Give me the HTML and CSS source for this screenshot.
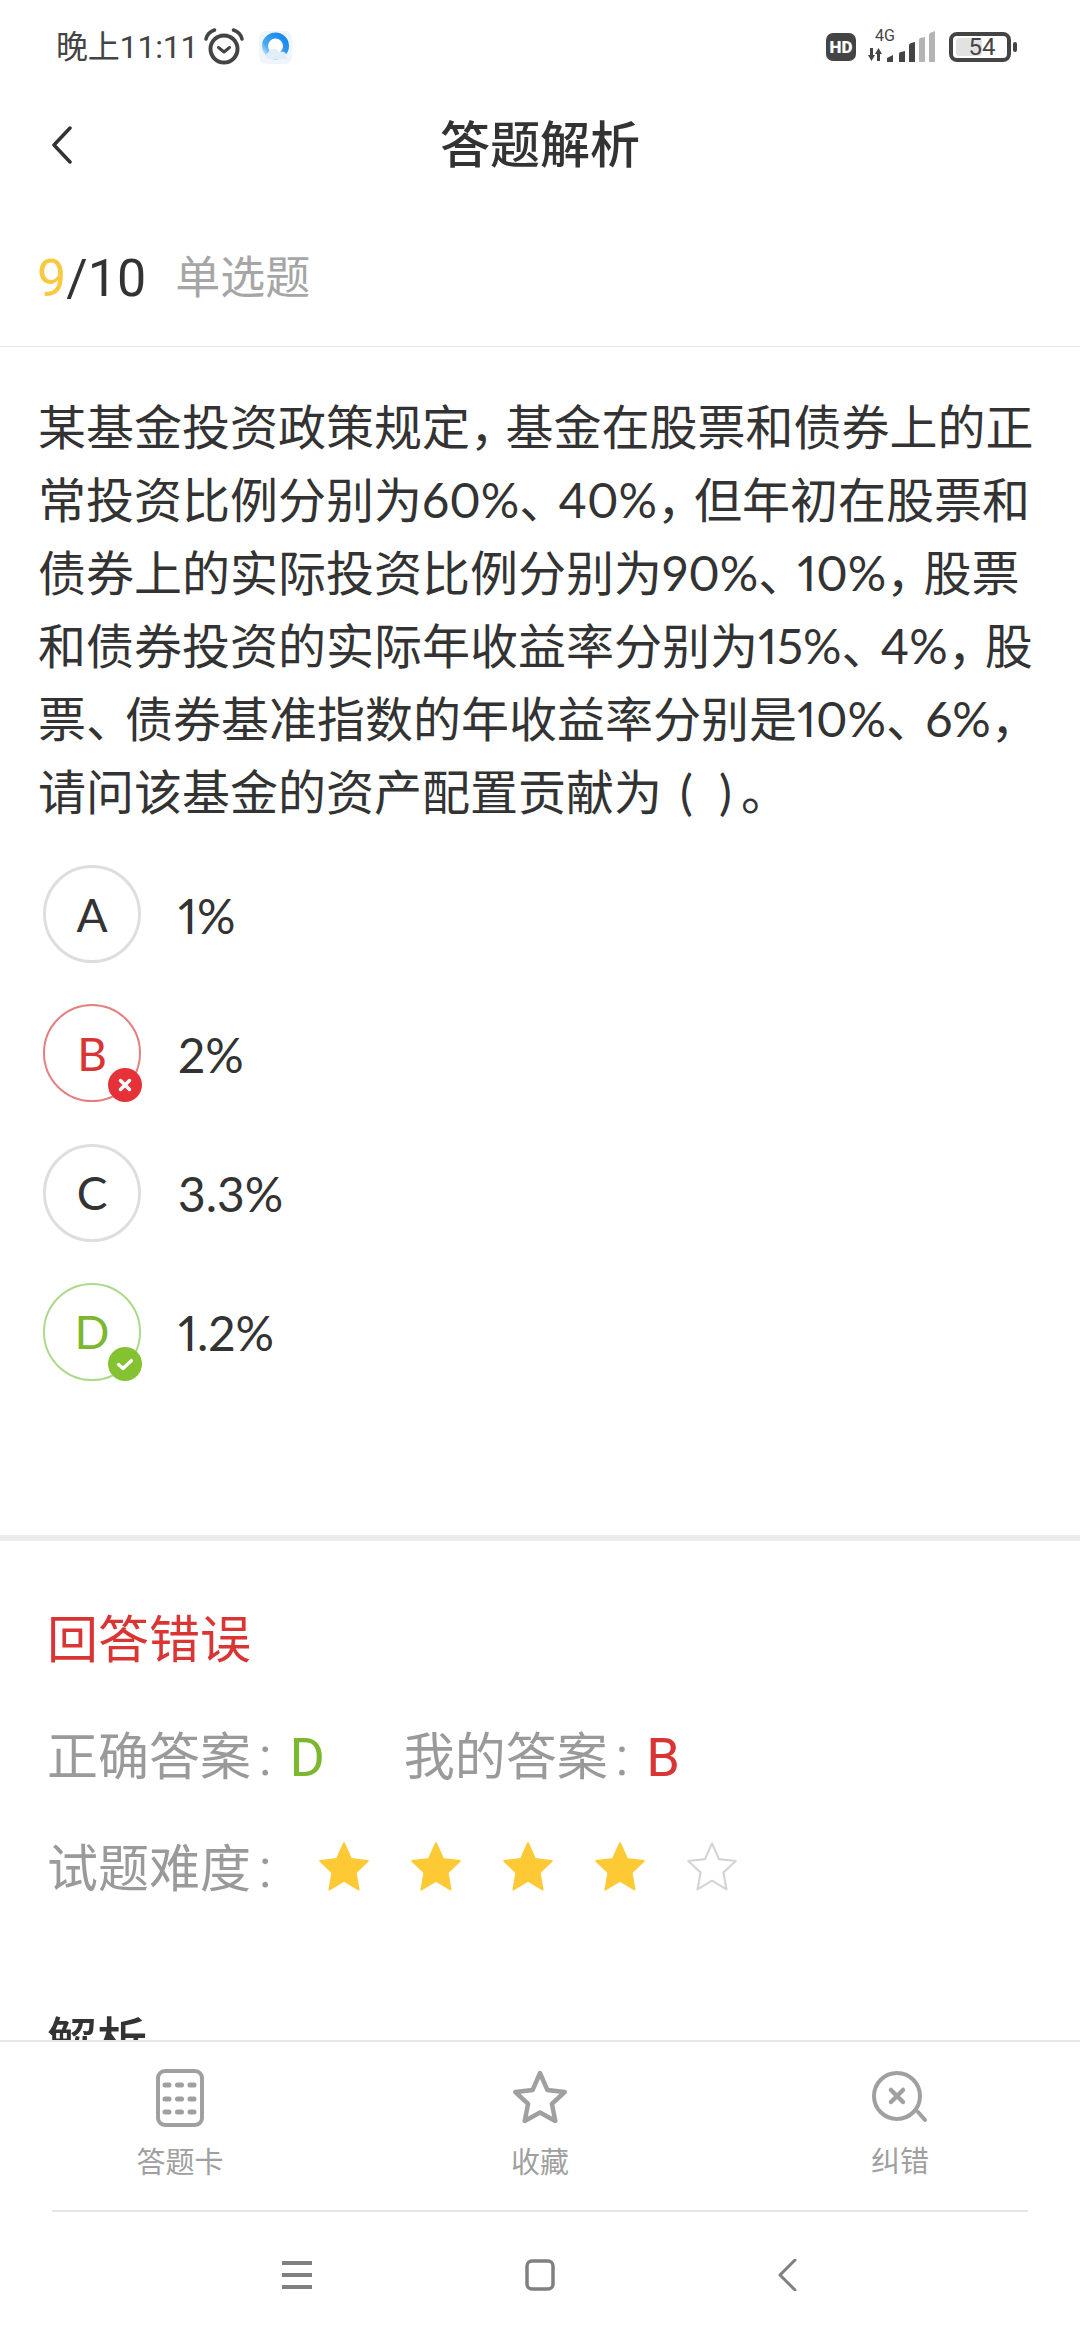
FILE: index.html
```html
<!DOCTYPE html>
<html lang="zh-CN">
<head>
<meta charset="utf-8">
<title>答题解析</title>
<link rel="stylesheet" href="styles.css">
</head>
<body>
<svg class="defs" width="0" height="0" aria-hidden="true">
  <defs>
    <polygon id="star-shape" points="25,3 31.5,17.6 46.9,19.4 35.6,30 38.4,45.6 25,37.6 11.6,45.6 14.4,30 3.1,19.4 18.5,17.6"/>
    <linearGradient id="app-ring" x1="1" y1="0" x2="0" y2="1">
      <stop offset="0" stop-color="#0f84ec"/>
      <stop offset="0.7" stop-color="#4aa8f0"/>
      <stop offset="1" stop-color="#cfe6fa"/>
    </linearGradient>
  </defs>
</svg>
<div class="page">
  <div class="scroll">
    <div class="status">
      <div class="status-left">
        <span class="clock">晚上11:11</span>
        <svg class="alarm" width="40" height="38" viewBox="0 0 40 38" fill="none" stroke="#444">
          <circle cx="20" cy="21" r="13.5" stroke-width="4"/>
          <path d="M14.5 19.5l5.5 4.5 5.5-4.5" stroke-width="3" stroke-linecap="round" stroke-linejoin="round"/>
          <path d="M2 11C3 6.500 6 3.500 10.500 2M38 11C37 6.500 34 3.500 29.500 2" stroke-width="3.500" stroke-linecap="round"/>
        </svg>
        <svg class="app" width="33" height="33" viewBox="0 0 33 33">
          <rect width="33" height="33" rx="7" fill="#f0f5fb"/>
          <circle cx="16.500" cy="15" r="10.500" fill="#fff" stroke="url(#app-ring)" stroke-width="6"/>
          <path d="M9 28c-3-1-3-5 0-6 1-5 9-6 11-1 5-2 9 2 8 7z" fill="#e1eefa"/>
        </svg>
      </div>
      <div class="status-right">
        <svg class="hd" width="30" height="28" viewBox="0 0 30 28">
          <rect width="30" height="28" rx="7" fill="#444"/>
          <text class="hd-text" x="15" y="20" text-anchor="middle">HD</text>
        </svg>
        <svg class="signal" width="68" height="36" viewBox="0 -4 68 36">
          <text class="net-text" x="7" y="11">4G</text>
          <path d="M2 18h3v7h2l-3.500 6L0 25h2zM10.500 18l3.500 6h-2v7H9v-7H7z" fill="#444"/>
          <path d="M19 32v-4l6-3v7zM31 32V24q0-2 2-2l4-1v11zM41 32V15q0-1 2-2l4-1v20z" fill="#444"/>
          <path d="M51 32V10q0-1 1-2l5-1v25zM61 32V5q0-1 1-2l5-2v31z" fill="#b4b4b4"/>
        </svg>
        <div class="battery">
          <div class="battery-body">
            <span class="battery-fill"></span>
            <span class="battery-num">54</span>
          </div>
          <span class="battery-tip"></span>
        </div>
      </div>
    </div>

    <header class="topbar">
      <svg class="topbar-back" width="22" height="38" viewBox="0 0 22 38" fill="none">
        <path d="M19 2L3 19l16 17" stroke="#333" stroke-width="3.500" stroke-linecap="round" stroke-linejoin="round"/>
      </svg>
      <h1 class="topbar-title">答题解析</h1>
    </header>

    <div class="meta">
      <span class="meta-count"><span class="meta-now">9</span>/10</span>
      <span class="meta-type">单选题</span>
    </div>

    <section class="quiz">
      <p class="stem">某基金投资政策规定<span class="cm">，</span>基金在股票和债券上的正<br>常投资比例分别为60%<span class="dn">、</span>40%<span class="cm cm-num">，</span>但年初在股票和<br>债券上的实际投资比例分别为90%<span class="dn">、</span>10%<span class="cm cm-num">，</span>股票<br>和债券投资的实际年收益率分别为15%<span class="dn">、</span>4%<span class="cm cm-num">，</span>股<br>票<span class="dn">、</span>债券基准指数的年收益率分别是10%<span class="dn">、</span>6%<span class="cm cm-num">，</span><br>请问该基金的资产配置贡献为<span class="paren">( )</span>。</p>
      <ul class="options">
        <li class="option">
          <span class="bubble">A</span>
          <span class="option-text">1%</span>
        </li>
        <li class="option">
          <span class="bubble bubble-wrong">B
            <svg class="mark" width="34" height="34" viewBox="0 0 34 34">
              <circle cx="17" cy="17" r="17" fill="#e53238"/>
              <path d="M12.500 12.500l9 9m0-9l-9 9" stroke="#fff" stroke-width="3.500" stroke-linecap="round" fill="none"/>
            </svg>
          </span>
          <span class="option-text">2%</span>
        </li>
        <li class="option">
          <span class="bubble">C</span>
          <span class="option-text">3.3%</span>
        </li>
        <li class="option">
          <span class="bubble bubble-right">D
            <svg class="mark" width="34" height="34" viewBox="0 0 34 34">
              <circle cx="17" cy="17" r="17" fill="#85c232"/>
              <path d="M10.500 17.500l4.500 4 8.500-8" stroke="#fff" stroke-width="3.200" stroke-linecap="round" stroke-linejoin="round" fill="none"/>
            </svg>
          </span>
          <span class="option-text">1.2%</span>
        </li>
      </ul>
    </section>

    <section class="result">
      <h2 class="verdict">回答错误</h2>
      <div class="answers">
        <span class="answer"><span class="label">正确答案</span><span class="colon">:</span><span class="value value-right">D</span></span>
        <span class="answer"><span class="label">我的答案</span><span class="colon">:</span><span class="value value-wrong">B</span></span>
      </div>
      <div class="difficulty">
        <span class="label">试题难度</span><span class="colon">:</span>
        <div class="stars">
          <svg class="star" viewBox="0 0 50 48"><use href="#star-shape"/></svg>
          <svg class="star" viewBox="0 0 50 48"><use href="#star-shape"/></svg>
          <svg class="star" viewBox="0 0 50 48"><use href="#star-shape"/></svg>
          <svg class="star" viewBox="0 0 50 48"><use href="#star-shape"/></svg>
          <svg class="star star-empty" viewBox="0 0 50 48"><use href="#star-shape"/></svg>
        </div>
      </div>
      <h2 class="analysis">解析</h2>
    </section>
  </div>

  <footer class="tools">
    <div class="tool-row">
      <div class="tool">
        <svg class="tool-icon" width="60" height="60" viewBox="0 0 60 60" fill="none" stroke="#a0a0a0">
          <rect x="8" y="2" width="44" height="54" rx="7" stroke-width="4"/>
          <path d="M15 16h4M27.500 16h4M40 16h4M15 30h4M27.500 30h4M40 30h4M15 43h4M27.500 43h4M40 43h4" stroke-width="5" stroke-linecap="round"/>
        </svg>
        <span class="tool-label">答题卡</span>
      </div>
      <div class="tool">
        <svg class="tool-icon" width="60" height="60" viewBox="0 0 60 60" fill="none">
          <polygon points="30,4 37.300,20.900 54.700,23 41.900,34.900 45.300,52 30,43.500 14.700,52 18.100,34.900 5.300,23 22.700,20.900" stroke="#a0a0a0" stroke-width="4.500" stroke-linejoin="round"/>
        </svg>
        <span class="tool-label">收藏</span>
      </div>
      <div class="tool tool-raised">
        <svg class="tool-icon" width="60" height="60" viewBox="0 0 60 60" fill="none" stroke="#a0a0a0" stroke-linecap="round">
          <circle cx="27" cy="28" r="23" stroke-width="4"/>
          <path d="M21 22l12 12m0-12L21 34" stroke-width="4.500"/>
          <path d="M48 44l7 8" stroke-width="4"/>
        </svg>
        <span class="tool-label">纠错</span>
      </div>
    </div>
    <div class="tool-rule"></div>
    <nav class="sysnav">
      <svg width="30" height="32" viewBox="0 0 30 32" fill="none" stroke="#808080" stroke-width="4">
        <path d="M0 4h30M0 16h30M0 28h30"/>
      </svg>
      <svg width="30" height="32" viewBox="0 0 30 32" fill="none" stroke="#808080" stroke-width="3.500">
        <rect x="2" y="2" width="26" height="28" rx="5"/>
      </svg>
      <svg class="sysnav-back" width="30" height="32" viewBox="0 0 30 32" fill="none" stroke="#808080" stroke-width="3" stroke-linecap="round" stroke-linejoin="round">
        <path d="M23 1L8 16l15 15"/>
      </svg>
    </nav>
  </footer>
</div>
</body>
</html>
```
FILE: styles.css
```css
* {
  box-sizing: border-box;
}

html,
body {
  margin: 0;
  padding: 0;
  background: #fff;
}

body {
  font-family: "Roboto", "Noto Sans CJK SC", sans-serif;
  color: #333;
}

.defs {
  position: absolute;
}

.page {
  width: 1080px;
  height: 2340px;
  display: flex;
  flex-direction: column;
  overflow: hidden;
}

.scroll {
  height: 2040px;
  overflow: hidden;
}

/* status bar */
.status {
  height: 95px;
  padding: 28px 63px 0 56px;
  display: flex;
  justify-content: space-between;
  align-items: flex-start;
}

.status-left,
.status-right {
  display: flex;
}

.status-left {
  align-items: center;
}

.status-right {
  align-items: flex-end;
  margin-top: -2px;
}

.clock {
  font-size: 32px;
  line-height: 36px;
  color: #444;
  letter-spacing: -0.2px;
}

.alarm {
  margin-left: 6px;
}

.app {
  margin-left: 15px;
}

.hd {
  margin-bottom: 1px;
}

.hd-text {
  font-family: "Roboto", sans-serif;
  font-weight: 900;
  font-size: 17px;
  fill: #fff;
}

.net-text {
  font-family: "Roboto", sans-serif;
  font-size: 16px;
  fill: #444;
}

.signal {
  margin-left: 12px;
}

.battery {
  margin-left: 13px;
  display: flex;
  align-items: center;
  gap: 2px;
}

.battery-body {
  position: relative;
  width: 62px;
  height: 30px;
  border: 4px solid #444;
  border-radius: 8px;
  display: flex;
  align-items: center;
  justify-content: center;
}

.battery-fill {
  position: absolute;
  left: 3px;
  top: 2px;
  bottom: 2px;
  width: 26px;
  background: #e2e2e2;
  border-radius: 3px;
}

.battery-num {
  position: relative;
  font-size: 24px;
  line-height: 22px;
  color: #444;
  margin-left: 4px;
}

.battery-tip {
  width: 4px;
  height: 10px;
  background: #444;
  border-radius: 2px;
}

/* title bar */
.topbar {
  position: relative;
  height: 100px;
  padding-top: 2px;
  display: flex;
  align-items: center;
  justify-content: center;
}

.topbar-back {
  position: absolute;
  left: 51px;
  top: 31px;
}

.topbar-title {
  margin: 0;
  font-size: 50px;
  line-height: 60px;
  font-weight: 500;
}

/* question index */
.meta {
  height: 152px;
  padding: 0 0 37px 37px;
  display: flex;
  align-items: flex-end;
  gap: 29px;
  border-bottom: 1px solid #e6e6e6;
}

.meta-count {
  font-size: 52px;
  line-height: 60px;
}

.meta-now {
  color: #f8c93e;
}

.meta-type {
  font-size: 45px;
  line-height: 60px;
  color: #a6a6a6;
}

/* question */
.quiz {
  padding: 43px 0 154px;
  border-bottom: 6px solid #ececec;
}

.stem {
  margin: 0;
  padding-left: 38px;
  font-family: "Lato", "Noto Sans CJK SC", sans-serif;
  font-feature-settings: "pnum";
  font-size: 48px;
  line-height: 73px;
  color: #333;
  white-space: nowrap;
}

.cm {
  letter-spacing: -12.5px;
}

.cm-num {
  letter-spacing: -11px;
}

.dn {
  letter-spacing: -9px;
}

.paren {
  margin-left: 18px;
  margin-right: 9px;
  word-spacing: 14px;
}

.options {
  list-style: none;
  margin: 37px 0 0;
  padding: 0 0 0 43px;
  display: flex;
  flex-direction: column;
  gap: 41.3px;
}

.option {
  display: flex;
  align-items: center;
  gap: 37px;
  font-family: "Lato", sans-serif;
  font-feature-settings: "pnum";
}

.bubble {
  position: relative;
  width: 98px;
  height: 98px;
  border: 3px solid #dedede;
  border-radius: 50%;
  display: flex;
  align-items: center;
  justify-content: center;
  font-size: 46px;
  color: #333;
}

.bubble-wrong {
  border: 2px solid #e58080;
  color: #d93535;
}

.bubble-right {
  border: 2px solid #aed88c;
  color: #7cb82f;
}

.mark {
  position: absolute;
  right: -3px;
  bottom: -2px;
}

.option-text {
  font-size: 48px;
  line-height: 60px;
  margin-top: 3px;
}

/* result summary */
.result {
  padding: 70px 0 0 47px;
}

.verdict {
  margin: 0;
  font-size: 51px;
  line-height: 60px;
  font-weight: 400;
  color: #d93535;
}

.answers {
  margin-top: 57px;
  display: flex;
  gap: 79px;
}

.answer {
  display: flex;
}

.answers,
.difficulty {
  font-size: 51px;
  line-height: 60px;
  color: #9a9a9a;
}

.colon {
  margin-left: 8px;
}

.value {
  margin-left: 18px;
  font-size: 54px;
}

.value-right {
  color: #7cb82f;
}

.value-wrong {
  color: #d93535;
}

.difficulty {
  margin-top: 52px;
  display: flex;
  align-items: center;
}

.stars {
  margin-left: 46px;
  display: flex;
  gap: 38px;
  margin-top: -8px;
}

.star {
  width: 54px;
  height: 52px;
  fill: #fdca35;
  stroke: #fdca35;
  stroke-width: 2;
  stroke-linejoin: round;
}

.star-empty {
  fill: #fff;
  stroke: #d4d4d4;
}

.analysis {
  margin: 112px 0 0;
  font-size: 50px;
  line-height: 60px;
  font-weight: 500;
}

/* bottom actions */
.tools {
  flex: 1;
  border-top: 2px solid #e6e6e6;
  display: flex;
  flex-direction: column;
}

.tool-row {
  height: 168px;
  padding-top: 27px;
  display: grid;
  grid-template-columns: repeat(3, 1fr);
}

.tool-rule {
  height: 2px;
  margin: 0 52px;
  background: #e6e6e6;
}

.tool {
  display: flex;
  flex-direction: column;
  align-items: center;
}

.tool-raised {
  margin-top: -1px;
}

.tool-label {
  margin-top: 14px;
  font-size: 29px;
  line-height: 40px;
  color: #a0a0a0;
}

/* system navigation */
.sysnav {
  flex: 1;
  padding: 47px 0 0 4px;
  display: flex;
  justify-content: center;
  gap: 213px;
  align-items: flex-start;
}

.sysnav-back {
  margin-left: 4px;
}
```
